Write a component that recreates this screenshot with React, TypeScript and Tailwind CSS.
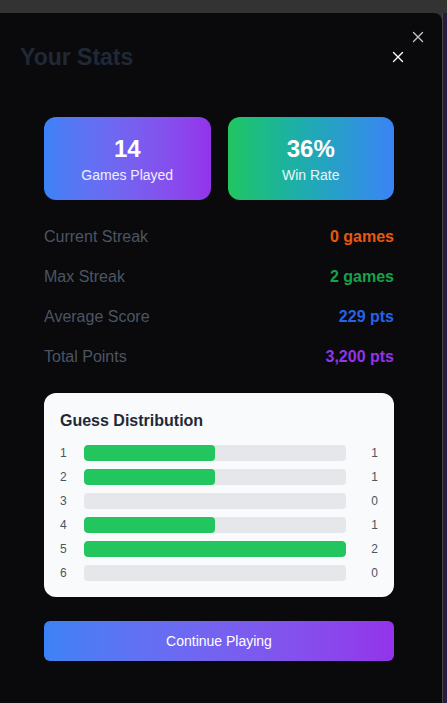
const stats = [
  { label: "Current Streak", value: "0 games", color: "text-[#ea580c]" },
  { label: "Max Streak", value: "2 games", color: "text-[#16a34a]" },
  { label: "Average Score", value: "229 pts", color: "text-[#2563eb]" },
  { label: "Total Points", value: "3,200 pts", color: "text-[#9333ea]" },
];

const distribution = [1, 1, 0, 1, 2, 0];

const CloseIcon = ({ className }: { className: string }) => (
  <svg viewBox="0 0 12 12" className={className} fill="none" stroke="currentColor" strokeWidth={1.4} strokeLinecap="round">
    <path d="M1.5 1.5l9 9M10.5 1.5l-9 9" />
  </svg>
);

export default function App() {
  const max = Math.max(...distribution);

  return (
    <div className="flex h-[703px] w-[447px] flex-col overflow-hidden bg-[#333333] font-['Liberation_Sans',Arial,sans-serif]">
      <div className="h-[13px] shrink-0" />
      <div className="flex flex-1">
        <div className="relative w-[442px] rounded-tr-lg bg-[#0a0a0c]">
          <button className="absolute right-[18px] top-[18px] text-[#c4c4c8]">
            <CloseIcon className="h-3 w-3" />
          </button>

          <div className="flex items-center justify-between pl-5 pr-[38px] pt-[30px]">
            <h2 className="text-[23px] font-bold leading-7 text-[#1f2937]">Your Stats</h2>
            <button className="text-white">
              <CloseIcon className="h-3 w-3" />
            </button>
          </div>

          <div className="ml-[44px] mr-[48px] mt-[46px] flex flex-col">
            <div className="grid grid-cols-2 gap-[17px]">
              <div className="flex h-[83px] flex-col items-center justify-center rounded-xl bg-gradient-to-r from-[#3b82f6] to-[#9333ea] text-white">
                <p className="text-2xl font-bold leading-8">14</p>
                <p className="text-sm leading-5 text-white/90">Games Played</p>
              </div>
              <div className="flex h-[83px] flex-col items-center justify-center rounded-xl bg-gradient-to-r from-[#22c55e] to-[#3b82f6] text-white">
                <p className="text-2xl font-bold leading-8">36%</p>
                <p className="text-sm leading-5 text-white/90">Win Rate</p>
              </div>
            </div>

            <div className="mt-[25px] flex flex-col gap-4">
              {stats.map((s) => (
                <div key={s.label} className="flex items-center justify-between text-base leading-6">
                  <span className="text-[#4b5563]">{s.label}</span>
                  <span className={`font-bold ${s.color}`}>{s.value}</span>
                </div>
              ))}
            </div>

            <div className="mt-6 rounded-xl bg-[#f8fafc] p-4">
              <h3 className="mb-3 text-base font-bold leading-6 text-[#1f2937]">Guess Distribution</h3>
              <div className="flex flex-col gap-2">
                {distribution.map((count, i) => (
                  <div key={i} className="flex h-4 items-center text-xs text-[#4b5563]">
                    <span className="w-6">{i + 1}</span>
                    <div className="h-4 flex-1 overflow-hidden rounded bg-[#e5e7eb]">
                      <div className="h-full rounded bg-[#22c55e]" style={{ width: `${(count / max) * 100}%` }} />
                    </div>
                    <span className="w-8 text-right">{count}</span>
                  </div>
                ))}
              </div>
            </div>

            <button className="mt-6 h-10 rounded-md bg-gradient-to-r from-[#3b82f6] to-[#9333ea] text-sm text-white">
              Continue Playing
            </button>
          </div>
        </div>
        <div className="flex-1 border-l border-[#444] bg-[#2a1b3d]" />
      </div>
    </div>
  );
}
